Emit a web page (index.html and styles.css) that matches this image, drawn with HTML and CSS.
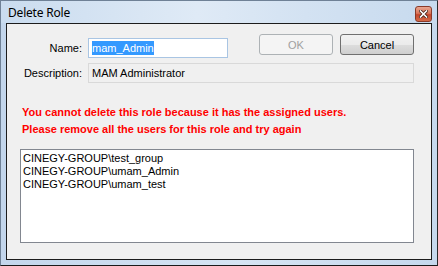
FILE: index.html
```html
<!DOCTYPE html>
<html>
<head>
<meta charset="utf-8">
<link rel="stylesheet" href="styles.css">
</head>
<body>
<div class="window">
  <div class="titlebar">
    <span class="title">Delete Role</span>
    <div class="close">
      <svg width="9" height="8" viewBox="0 0 9 8">
        <path d="M1.5 1 L7.5 7 M7.5 1 L1.5 7" stroke="#4a2418" stroke-width="3.2" stroke-linecap="square"/>
        <path d="M1.5 1 L7.5 7 M7.5 1 L1.5 7" stroke="#ffffff" stroke-width="1.6" stroke-linecap="square"/>
      </svg>
    </div>
  </div>
  <div class="client">
    <div class="row-top">
      <div class="pair">
        <label class="lbl">Name:</label>
        <div class="field name-field"><span class="sel">mam_Admin</span></div>
      </div>
      <div class="buttons">
        <button class="btn btn-disabled">OK</button>
        <button class="btn">Cancel</button>
      </div>
    </div>
    <div class="pair row-desc">
      <label class="lbl">Description:</label>
      <div class="field desc-field">MAM Administrator</div>
    </div>
    <div class="warning">
      <div>You cannot delete this role because it has the assigned users.</div>
      <div>Please remove all the users for this role and try again</div>
    </div>
    <div class="listbox">
      <div class="item">CINEGY-GROUP\test_group</div>
      <div class="item">CINEGY-GROUP\umam_Admin</div>
      <div class="item">CINEGY-GROUP\umam_test</div>
    </div>
  </div>
</div>
</body>
</html>
```
FILE: styles.css
```css
html, body {
  margin: 0;
  padding: 0;
  background: #ffffff;
}
body {
  font-family: "Liberation Sans", Arial, sans-serif;
  font-size: 11px;
  color: #000;
}
.window {
  width: 438px;
  height: 266px;
  box-sizing: border-box;
  border: 1px solid #6f8196;
  border-bottom-color: #1a1a1a;
  border-right-color: #2a2a2a;
  background: linear-gradient(to right, #c3d6ec 0%, #d6e4f3 55%, #c5d8ed 100%);
  padding: 0 5px 5px 5px;
  display: flex;
  flex-direction: column;
}
.titlebar {
  height: 22px;
  margin: 0 -5px;
  padding: 0 5px 0 7px;
  display: flex;
  align-items: flex-start;
  justify-content: space-between;
  background: linear-gradient(to right, #cadcef 0%, #dfeaf6 45%, #d3e2f2 70%, #c7daee 100%);
}
.title {
  font-family: "Noto Sans", sans-serif;
  font-size: 12px;
  line-height: 16px;
  margin-top: 4px;
  color: #000;
  letter-spacing: -0.2px;
}
.close {
  width: 17px;
  height: 16px;
  margin-top: 5px;
  box-sizing: border-box;
  border: 1px solid #8a3a28;
  border-radius: 3px;
  background: linear-gradient(to bottom, #e9a58f 0%, #d9765b 45%, #c4462b 55%, #d46a48 100%);
  display: flex;
  align-items: center;
  justify-content: center;
}
.close svg { display: block; }
.client {
  flex: 1;
  border: 1px solid #1c1c1c;
  background: #f0f0f0;
  padding: 10px 17px 0 13px;
  display: flex;
  flex-direction: column;
}
.row-top {
  display: flex;
  align-items: flex-start;
  justify-content: space-between;
  height: 24px;
}
.pair {
  display: flex;
  align-items: center;
}
.row-top .pair {
  margin-top: 4px;
}
.lbl {
  width: 62px;
  text-align: right;
  margin-right: 6px;
  white-space: nowrap;
}
.field {
  height: 20px;
  box-sizing: border-box;
  display: flex;
  align-items: center;
  padding-left: 3px;
  white-space: nowrap;
}
.name-field {
  width: 140px;
  border: 1px solid #a9c5e3;
  background: #ffffff;
}
.sel {
  background: #3399ff;
  color: #ffffff;
  line-height: 14px;
}
.desc-field {
  width: 326px;
  border: 1px solid #d9d9d9;
  background: #f0f0f0;
}
.row-desc {
  margin-top: 5px;
}
.buttons {
  display: flex;
  gap: 7px;
}
.btn {
  width: 74px;
  height: 21px;
  box-sizing: border-box;
  border: 1px solid #707070;
  border-radius: 3px;
  font-family: "Liberation Sans", Arial, sans-serif;
  font-size: 11px;
  color: #000;
  padding: 0;
  background: linear-gradient(to bottom, #f2f2f2 0%, #ebebeb 50%, #dddddd 51%, #cfcfcf 100%);
}
.btn-disabled {
  border-color: #adb2b5;
  background: #f4f4f4;
  color: #a0a0a0;
}
.warning {
  margin-top: 21px;
  padding-left: 2px;
  color: #ff0000;
  font-weight: bold;
  line-height: 17px;
}
.listbox {
  margin-top: 11px;
  height: 94px;
  box-sizing: border-box;
  border: 1px solid #828790;
  background: #ffffff;
  padding: 2px 2px;
}
.item {
  line-height: 13px;
  white-space: nowrap;
}
```
